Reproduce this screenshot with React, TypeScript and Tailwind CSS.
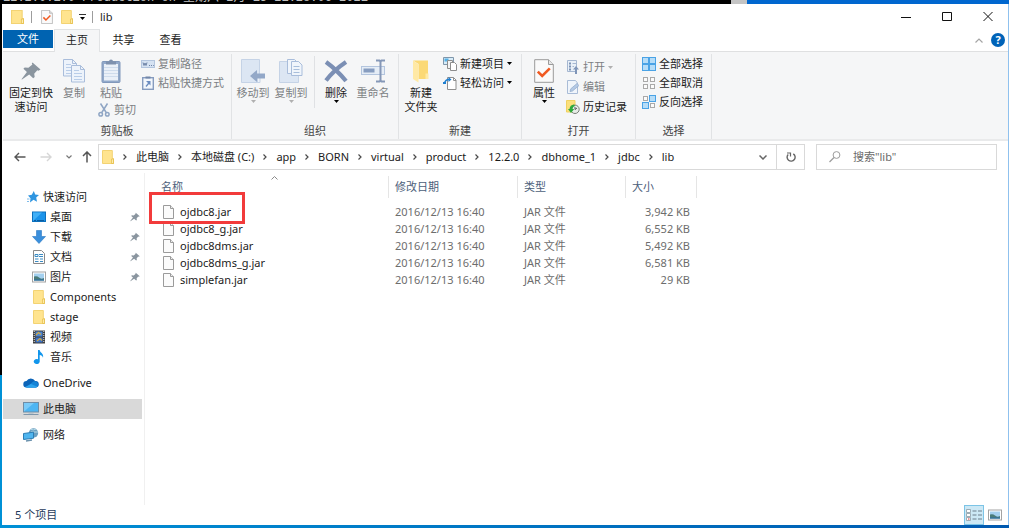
import { ReactNode } from 'react';

interface IconProps {
  className?: string;
}

interface JarFile {
  name: string;
  modified: string;
  type: string;
  size: string;
  highlighted?: boolean;
}

interface NavItem {
  label: string;
  icon: ReactNode;
  pinned?: boolean;
}

const FolderIcon = ({ className = 'h-3.5 w-3' }: IconProps) => (
  <svg className={className} viewBox="0 0 12 14" preserveAspectRatio="none">
    <path d="M0.5 0.5h9.8v8h1.2v5H0.5z" fill="#ffe48f" stroke="#f3d373" />
    <path d="M9.6 9h1.9v4.5H9.6z" fill="#fff0b5" stroke="#e3b93f" strokeWidth="0.7" />
  </svg>
);

const PropertiesIcon = ({ className = 'h-6 w-5' }: IconProps) => (
  <svg className={className} viewBox="0 0 20 24">
    <path d="M0.7 0.7h13.8l4.8 4.8v17.8H0.7z" fill="#fafafa" stroke="#9a9a9a" />
    <path d="M14.5 0.7v4.8h4.8" fill="#e6e6e6" stroke="#9a9a9a" />
    <path d="M3.8 12.6l4.4 4.4 7.6-7.6" fill="none" stroke="#f05a22" strokeWidth="2.6" />
  </svg>
);

const PinIcon = ({ className = 'h-5 w-5' }: IconProps) => (
  <svg className={className} viewBox="0 0 20 18">
    <path d="M11.5 0.5l8 7-2 1.2-1.2-.5-3.1 3.6.5 3.2-1.5 1.2-4-3.6L1 17.6l-.5-.4L5.9 10 2.4 6.8l1.3-1.3 3.7.3 4-3.2-.6-1.2z" fill="#8a959f" />
  </svg>
);

const Sheet = ({ x, y }: { x: number; y: number }) => (
  <g transform={`translate(${x} ${y})`}>
    <path d="M0.5 0.5h9l4 4v12.5h-13z" fill="#edf3fb" stroke="#a9bddb" />
    <path d="M9.5 0.5v4h4" fill="none" stroke="#a9bddb" />
    <path d="M3 5.5h5M3 8.5h8M3 11.5h8M3 14.500h8" stroke="#b9cde8" />
  </g>
);

const CopyIcon = () => (
  <svg className="h-6 w-6" viewBox="0 0 24 24">
    <Sheet x={1} y={0} />
    <Sheet x={9} y={6} />
  </svg>
);

const PasteIcon = () => (
  <svg className="h-6 w-5" viewBox="0 0 20 24">
    <rect x="1" y="2.5" width="18" height="21" rx="1" fill="#92a9ca" stroke="#8198bb" />
    <path d="M3 5h14v16.500H3z" fill="#eaf0f8" />
    <path d="M3 8.500h14M3 11.500h14M3 14.500h14M3 17.500h14" stroke="#cfdcec" />
    <path d="M5 5.500V2.500h3a2 2 0 0 1 4 0h3v3z" fill="#7e91ae" />
  </svg>
);

const CutIcon = () => (
  <svg className="h-3.5 w-3" viewBox="0 0 12 14" fill="none" stroke="#8fa5c4" strokeWidth="1.500">
    <path d="M2.500 0.500l5.700 9M9.500 0.500L3.800 9.500" />
    <circle cx="2.700" cy="11.200" r="1.800" />
    <circle cx="9.300" cy="11.200" r="1.800" />
  </svg>
);

const CopyPathIcon = () => (
  <svg className="h-3 w-3.5" viewBox="0 0 14 12">
    <rect x="0.500" y="2.500" width="13" height="7" fill="#d5e2f2" stroke="#b3c5de" />
    <path d="M2 4.500l1 3 1-2.500 1 2.500 1-3M8 7.500h1M10 7.500h1M12 7.500h.8" fill="none" stroke="#6e83a6" />
  </svg>
);

const PasteShortcutIcon = () => (
  <svg className="h-3.5 w-3" viewBox="0 0 12 14">
    <rect x="0.700" y="1.700" width="10.600" height="11.600" fill="#f3f7fc" stroke="#869cbf" strokeWidth="1.400" />
    <path d="M3.500 0.500h5v2h-5z" fill="#7186a8" />
    <path d="M4 5h4.500v4.500L7 8l-2.500 3L3.500 10 6 7z" fill="#6b8cbf" />
  </svg>
);

const MoveToIcon = () => (
  <svg className="h-6 w-6" viewBox="0 0 24 24">
    <path d="M0.500 0.500h18v23h-18z" fill="#dce6f3" stroke="#c5d3e6" />
    <path d="M16.500 17.500h2.500v6h-2.500z" fill="#eff4fa" stroke="#c5d3e6" />
    <path d="M9 17l7-6v3.500h8v5h-8V23z" fill="#93a8c8" />
  </svg>
);

const CopyToIcon = () => (
  <svg className="h-6 w-6" viewBox="0 0 24 24">
    <path d="M0.500 2.500h19v21H0.500z" fill="#dce6f3" stroke="#c5d3e6" />
    <path d="M8.500 0.500h7l3 3v11h-10z" fill="#f0f5fb" stroke="#a9bddb" />
    <path d="M12.500 2.500h7l3.500 3.500v10.500H12.500z" fill="#f0f5fb" stroke="#a9bddb" />
    <path d="M14.500 7.500h6M14.500 10.500h6M14.500 13.500h6" stroke="#a8bedb" />
  </svg>
);

const DeleteIcon = () => (
  <svg className="h-6 w-6" viewBox="0 0 24 24">
    <path d="M2 3q11 8 20 19M22 3Q10 11 2 21.500" fill="none" stroke="#7b8fb4" strokeWidth="4.200" />
  </svg>
);

const RenameIcon = () => (
  <svg className="h-6 w-6" viewBox="0 0 24 24">
    <rect x="0.500" y="7.500" width="23" height="8" fill="#e5edf6" stroke="#b3c5de" />
    <path d="M2.500 9.500h11v4h-11z" fill="#879dc0" />
    <path d="M15 1.500h3.500l1 1 1-1H24M15 22.500h3.500l1-1 1 1H24M19.500 2.500v19" fill="none" stroke="#8598b8" strokeWidth="2" />
  </svg>
);

const NewFolderIcon = () => (
  <svg className="h-6 w-5" viewBox="0 0 20 24">
    <path d="M7.500 5V20h9.500V1.500H2z" fill="#fbd976" />
    <path d="M14.500 14.500h3v5.500h-3z" fill="#ffeaa6" />
    <path d="M2 1.500v18.500l5.500 3.500V5.500z" fill="#ffe9a5" />
  </svg>
);

const NewItemIcon = () => (
  <svg className="h-3.5 w-3.5" viewBox="0 0 14 14">
    <path d="M0.500 0.500h10v7h-10z" fill="#d8ecf8" stroke="#7f96aa" />
    <path d="M1.500 1.500h4v3h-4z" fill="#54b1e6" />
    <path d="M4.500 3.500h5v8h-5z" fill="#f4f4f4" stroke="#8d8d8d" />
    <path d="M7.500 5.500h4l2 2v6h-6z" fill="#fff" stroke="#8d8d8d" />
  </svg>
);

const EasyAccessIcon = () => (
  <svg className="h-3.5 w-3.5" viewBox="0 0 14 14">
    <path d="M4.500 1.500h6l2.500 2.500v9.500H4.500z" fill="#fff" stroke="#909090" />
    <path d="M10.500 1.500v3H13" fill="none" stroke="#909090" />
    <path d="M1.500 7.500C2 4.500 3.500 3.500 6 3.500" fill="none" stroke="#1f7fd0" strokeWidth="1.600" />
    <path d="M5.500 1L8.500 3.500 5.500 6z" fill="#1f7fd0" />
    <path d="M0 6h3v2H0z" fill="#1f7fd0" />
  </svg>
);

const OpenIcon = () => (
  <svg className="h-3.5 w-3" viewBox="0 0 12 14">
    <path d="M0.500 0.500h9v11h-9z" fill="#e9f0f8" stroke="#a5b7d1" />
    <path d="M2 2.500h2v2H2zM2 5.500h2v2H2zM2 8.500h2v2H2z" fill="#7d93b6" />
    <path d="M5.500 3.500H9M5.500 6.500H7" stroke="#a5b7d1" />
    <path d="M9 6l3 3.500h-2V14H8V9.500H6z" fill="#7f95b8" />
  </svg>
);

const EditIcon = () => (
  <svg className="h-3.5 w-3" viewBox="0 0 12 14">
    <path d="M0.500 0.500h8l2 2.500v10.500H0.500z" fill="#f0f5fb" stroke="#a9bcd7" />
    <path d="M3 11.500l.8-2.700L10 3.500 12 5.500 5.500 11z" fill="#b5cae5" stroke="#8fa7c9" strokeWidth="0.700" />
  </svg>
);

const HistoryIcon = () => (
  <svg className="h-3.5 w-3.5" viewBox="0 0 14 14">
    <path d="M0.500 0.500h8.500v11.500H0.500z" fill="#fbe07c" stroke="#f0d160" />
    <circle cx="9" cy="9.300" r="4.200" fill="#e7ece7" stroke="#788078" />
    <path d="M9 7v2.500l2-1.500" fill="none" stroke="#555" />
    <path d="M8 4.500A5 5 0 0 0 3.500 9H2l3 4 3.200-4H6.500A3.500 3.500 0 0 1 9 6z" fill="#2fa83d" />
  </svg>
);

interface SelectionIconProps {
  filled: number[];
}

// Four squares; the filled indexes are drawn as selected
const SelectionIcon = ({ filled }: SelectionIconProps) => (
  <svg className="h-3.5 w-3.5" viewBox="0 0 14 14">
    {[0, 1, 2, 3].map((i) => {
      const on = filled.includes(i);
      const x = (i % 2) * 7 + (on ? 0.5 : 1.5);
      const y = Math.floor(i / 2) * 7 + (on ? 0.5 : 1.5);
      const side = on ? 6 : 4;
      return (
        <rect key={i} x={x} y={y} width={side} height={side} fill={on ? '#b6ddf8' : '#fbfbfb'} stroke={on ? '#4aa3e6' : '#a9a9a9'} />
      );
    })}
  </svg>
);

const FileIcon = () => (
  <svg className="h-3.5 w-[11px] shrink-0" viewBox="0 0 11 14">
    <path d="M0.500 0.500h7l3 3v10h-10z" fill="#fbfbfb" stroke="#9b9b9b" />
    <path d="M7.500 0.500v3h3" fill="#eee" stroke="#9b9b9b" />
  </svg>
);

const StarIcon = () => (
  <svg className="h-3 w-3" viewBox="0 0 12 12">
    <path d="M6.800 0l1.400 3.600L12 4 9.200 6.600l.8 4.200-3.500-2L3 11.500l.5-4.200L1 4.600l3.800-.8z" fill="#2f95e0" />
    <path d="M0 8h2.500M0 10.500h2" stroke="#7fbcea" />
  </svg>
);

const DesktopIcon = () => (
  <svg className="h-3 w-3.5" viewBox="0 0 14 12">
    <rect x="0.500" y="1" width="13" height="9.500" fill="#1b93ea" stroke="#0c70bd" />
    <path d="M1 10L10 1.500H1z" fill="#41b0f7" />
    <path d="M2 9.500h2M5 9.500h7" stroke="#0b5c9f" />
  </svg>
);

const DownloadIcon = () => (
  <svg className="h-3.5 w-3.5" viewBox="0 0 14 14">
    <path d="M4.500 0.500h5v6H13.500L7 13.500 0.500 6.500h4z" fill="#3a8fdc" stroke="#2c78c2" strokeWidth="0.600" />
  </svg>
);

const DocumentIcon = () => (
  <svg className="h-3.5 w-3" viewBox="0 0 12 14">
    <path d="M0.500 0.500h8l3 3v10H0.500z" fill="#fdfdfd" stroke="#888" />
    <path d="M2 4.500h3v2H2zM6 4.500h4M6 6.500h4M2 9h3.500M7 9h3M2 11.500h3.500M7 11.500h3" fill="none" stroke="#3b8cc4" />
  </svg>
);

const PictureIcon = () => (
  <svg className="h-3 w-3.5" viewBox="0 0 14 12">
    <rect x="0.500" y="1" width="13" height="10" fill="#fff" stroke="#a3a3a3" />
    <path d="M2 2.500h10v7H2z" fill="#a4d0ef" />
    <path d="M2 5.500q3-1 5 1t5 0.500v2.500H2z" fill="#4a7b78" />
    <path d="M2 8.500h10v1H2z" fill="#2b6fab" />
  </svg>
);

const VideoIcon = () => (
  <svg className="h-3.5 w-3" viewBox="0 0 12 14">
    <path d="M0 0.500h12v13H0z" fill="#3f3f3f" />
    <path d="M1.200 1v12M10.800 1v12" stroke="#e6e6e6" strokeDasharray="1 1" />
    <path d="M2.500 1.500h7v5h-7z" fill="#4b86d6" />
    <path d="M2.500 7.500h7v5h-7z" fill="#3d73c7" />
    <path d="M3 5l2.500-2.500L8 4.500M4 11l3-2.500 2 2" fill="none" stroke="#d4a940" strokeWidth="1.200" />
  </svg>
);

const MusicIcon = () => (
  <svg className="h-3.5 w-3" viewBox="0 0 12 14">
    <path d="M5 0h1.700c0 2.500 4.300 3.300 3.300 7.800C9.500 5.800 8.300 5 6.700 5v6.200A3 2.500 0 1 1 5 9.300z" fill="#1296ec" />
  </svg>
);

const OneDriveIcon = () => (
  <svg className="h-3 w-4" viewBox="0 0 16 12">
    <path d="M3.500 10.500a3.200 3.200 0 0 1 0-6.400 4.800 4.800 0 0 1 8.600 0 3.200 3.200 0 0 1 .9 6.400z" fill="#0c64b8" />
    <path d="M3.300 10.500L9 5.500a3.700 3.700 0 0 1 4-1 3.200 3.200 0 0 1 0 6z" fill="#1583d6" />
    <path d="M3.500 10.500a3 3 0 0 1-1.500-.4l6-3.100 6.500 2.800a3 3 0 0 1-1.500.7z" fill="#2ba3ee" />
  </svg>
);

const ThisPcIcon = () => (
  <svg className="h-3.5 w-4" viewBox="0 0 16 14">
    <rect x="0.500" y="0.500" width="15" height="9.500" fill="#4db5f2" stroke="#6f8da6" />
    <path d="M1 9.500L11 1H1z" fill="#7bcbf8" />
    <path d="M5.500 10.500h5v1h-5z" fill="#9db2c2" />
    <path d="M0.500 12.500h15" stroke="#7f97ab" />
  </svg>
);

const NetworkIcon = () => (
  <svg className="h-3.5 w-4" viewBox="0 0 16 14">
    <circle cx="10.500" cy="5" r="4.700" fill="#6b9fc0" />
    <path d="M8 1.500q3 1 5-.5M8 4h7" stroke="#b7dbe9" fill="none" />
    <path d="M0.500 5.500l10-1.300v6l-10 1.300z" fill="#4fb5ef" stroke="#2d7db4" />
    <path d="M3 13l6-1" stroke="#6d93ae" strokeWidth="1.300" />
  </svg>
);

const Caret = ({ className = 'text-black' }: IconProps) => (
  <svg className={`h-[3px] w-[5px] shrink-0 ${className}`} viewBox="0 0 5 3">
    <path d="M0 0h5L2.500 3z" fill="currentColor" />
  </svg>
);

const Crumb = () => (
  <svg className="mx-[9px] h-1.5 w-1 shrink-0" viewBox="0 0 4 6">
    <path d="M0.500 0.500L3 3 0.500 5.500" fill="none" stroke="#4a4a4a" strokeWidth="1.200" />
  </svg>
);

interface LargeButtonProps {
  icon: ReactNode;
  lines: string[];
  width: string;
  disabled?: boolean;
  caret?: boolean;
}

const LargeButton = ({ icon, lines, width, disabled, caret }: LargeButtonProps) => (
  <button
    disabled={disabled}
    className={`flex shrink-0 flex-col items-center leading-[14px] ${width} ${disabled ? 'text-[#7c7f83]' : 'text-[#1b1b1b]'}`}
  >
    <span className="flex h-[30px] items-center">{icon}</span>
    {lines.map((line) => (
      <span key={line} className="whitespace-nowrap">{line}</span>
    ))}
    {caret && <Caret className={disabled ? 'text-[#b0b0b0]' : 'text-black'} />}
  </button>
);

interface SmallButtonProps {
  icon: ReactNode;
  label: string;
  disabled?: boolean;
  caret?: boolean;
  height?: string;
}

const SmallButton = ({ icon, label, disabled, caret, height = 'h-[19px]' }: SmallButtonProps) => (
  <button
    disabled={disabled}
    className={`flex items-center gap-[3px] whitespace-nowrap ${height} ${disabled ? 'text-[#7c7f83]' : 'text-[#1b1b1b]'}`}
  >
    <span className="flex w-3.5 justify-center">{icon}</span>
    {label}
    {caret && <Caret className={disabled ? 'text-[#b0b0b0]' : 'text-black'} />}
  </button>
);

interface GroupProps {
  label: string;
  width: string;
  children: ReactNode;
}

const Group = ({ label, width, children }: GroupProps) => (
  <section className={`mt-0.5 flex shrink-0 flex-col border-r border-[#e1e3e5] ${width}`}>
    <div className="flex h-[69px] items-start">{children}</div>
    <div className="text-center leading-4 text-[#444]">{label}</div>
  </section>
);

const files: JarFile[] = [
  { name: 'ojdbc8.jar', modified: '2016/12/13 16:40', type: 'JAR 文件', size: '3,942 KB', highlighted: true },
  { name: 'ojdbc8_g.jar', modified: '2016/12/13 16:40', type: 'JAR 文件', size: '6,552 KB' },
  { name: 'ojdbc8dms.jar', modified: '2016/12/13 16:40', type: 'JAR 文件', size: '5,492 KB' },
  { name: 'ojdbc8dms_g.jar', modified: '2016/12/13 16:40', type: 'JAR 文件', size: '6,581 KB' },
  { name: 'simplefan.jar', modified: '2016/12/13 16:40', type: 'JAR 文件', size: '29 KB' },
];

const quickAccess: NavItem[] = [
  { label: '桌面', icon: <DesktopIcon />, pinned: true },
  { label: '下载', icon: <DownloadIcon />, pinned: true },
  { label: '文档', icon: <DocumentIcon />, pinned: true },
  { label: '图片', icon: <PictureIcon />, pinned: true },
  { label: 'Components', icon: <FolderIcon /> },
  { label: 'stage', icon: <FolderIcon /> },
  { label: '视频', icon: <VideoIcon /> },
  { label: '音乐', icon: <MusicIcon /> },
];

const crumbs = ['此电脑', '本地磁盘 (C:)', 'app', 'BORN', 'virtual', 'product', '12.2.0', 'dbhome_1', 'jdbc', 'lib'];

const TitleBar = () => (
  <header className="flex h-[25px] items-center">
    <div className="flex items-center pl-2">
      <FolderIcon className="h-3.5 w-[13px]" />
      <span className="mx-[7px] h-3 w-px bg-[#9d9d9d]" />
      <button aria-label="属性" className="ml-0.5"><PropertiesIcon className="h-3.5 w-3" /></button>
      <button aria-label="新建文件夹" className="ml-2"><FolderIcon className="h-3.5 w-3" /></button>
      <button aria-label="自定义快速访问工具栏" className="ml-1.5 flex w-[7px] flex-col items-center gap-0.5">
        <span className="h-px w-[7px] bg-[#333]" />
        <Caret />
      </button>
      <span className="ml-1.5 h-3 w-px bg-[#9d9d9d]" />
      <h1 className="pl-[7px] text-[#1b1b1b]">lib</h1>
    </div>
    <div className="ml-auto flex h-full">
      <button aria-label="最小化" className="flex w-[41px] items-center justify-center">
        <svg className="h-2.5 w-2.5" viewBox="0 0 10 10"><path d="M0 5.500h10" stroke="#111" /></svg>
      </button>
      <button aria-label="最大化" className="flex w-[41px] items-center justify-center">
        <svg className="h-[9px] w-2.5" viewBox="0 0 10 9"><path d="M0.500 0.500h9v8h-9z" fill="none" stroke="#111" /></svg>
      </button>
      <button aria-label="关闭" className="flex w-[41px] items-center justify-center">
        <svg className="h-[9px] w-2.5" viewBox="0 0 10 9"><path d="M0.500 0l9 9M9.500 0l-9 9" stroke="#111" /></svg>
      </button>
    </div>
  </header>
);

const TabBar = () => (
  <nav className="flex h-[23px] items-start border-b border-[#dfe0e1]">
    <button className="mt-px h-[18px] w-[50px] bg-[#0063b1] text-white">文件</button>
    <button className="ml-px h-[23px] w-[46px] border-x border-t border-[#e1e3e5] bg-[#f5f6f7] pb-0.5 text-[#1b1b1b]">主页</button>
    <button className="h-[21px] w-[47px] text-[#1b1b1b]">共享</button>
    <button className="h-[21px] w-[47px] text-[#1b1b1b]">查看</button>
    <div className="ml-auto flex h-full items-center gap-2 pr-[3px]">
      <button aria-label="最小化功能区">
        <svg className="h-[5px] w-2" viewBox="0 0 8 5"><path d="M0.500 4.500L4 1l3.500 3.500" fill="none" stroke="#a5a5a5" strokeWidth="1.200" /></svg>
      </button>
      <button aria-label="帮助" className="h-3.5 w-3.5 rounded-full bg-[#0063b8] text-[11px] leading-[14px] font-bold text-white">?</button>
    </div>
  </nav>
);

const Ribbon = () => (
  <div className="flex border-b-2 border-[#e9eaeb] bg-[#f5f6f7]">
    <Group label="剪贴板" width="w-[229px]">
      <div className="flex pt-0.5">
        <LargeButton icon={<PinIcon />} lines={['固定到快', '速访问']} width="w-14" />
        <LargeButton icon={<CopyIcon />} lines={['复制']} width="w-[30px]" disabled />
        <div className="ml-1 flex w-[46px] flex-col">
          <LargeButton icon={<PasteIcon />} lines={['粘贴']} width="w-9" disabled />
          <span className="pt-px pl-1"><SmallButton icon={<CutIcon />} label="剪切" height="h-[18px]" disabled /></span>
        </div>
      </div>
      <div className="ml-0.5">
        <SmallButton icon={<CopyPathIcon />} label="复制路径" disabled />
        <SmallButton icon={<PasteShortcutIcon />} label="粘贴快捷方式" disabled />
      </div>
    </Group>
    <Group label="组织" width="w-[167px]">
      <div className="flex pt-0.5 pl-0.5">
        <LargeButton icon={<MoveToIcon />} lines={['移动到']} width="w-[38px]" disabled caret />
        <LargeButton icon={<CopyToIcon />} lines={['复制到']} width="w-[38px]" disabled caret />
        <span className="mx-1 h-[52px] w-px bg-[#dfe1e4]" />
        <LargeButton icon={<DeleteIcon />} lines={['删除']} width="w-[34px]" caret />
        <LargeButton icon={<RenameIcon />} lines={['重命名']} width="w-10" disabled />
      </div>
    </Group>
    <Group label="新建" width="w-[123px]">
      <div className="pt-0.5"><LargeButton icon={<NewFolderIcon />} lines={['新建', '文件夹']} width="w-11" /></div>
      <div>
        <SmallButton icon={<NewItemIcon />} label="新建项目" caret />
        <SmallButton icon={<EasyAccessIcon />} label="轻松访问" caret />
      </div>
    </Group>
    <Group label="打开" width="w-[114px]">
      <div className="pt-0.5"><LargeButton icon={<PropertiesIcon />} lines={['属性']} width="w-11" caret /></div>
      <div className="pt-[3px]">
        <SmallButton icon={<OpenIcon />} label="打开" height="h-5" disabled caret />
        <SmallButton icon={<EditIcon />} label="编辑" height="h-5" disabled />
        <SmallButton icon={<HistoryIcon />} label="历史记录" height="h-5" />
      </div>
    </Group>
    <Group label="选择" width="w-[76px]">
      <div className="pl-1.5">
        <SmallButton icon={<SelectionIcon filled={[0, 1, 2, 3]} />} label="全部选择" />
        <SmallButton icon={<SelectionIcon filled={[]} />} label="全部取消" />
        <SmallButton icon={<SelectionIcon filled={[1, 2]} />} label="反向选择" />
      </div>
    </Group>
  </div>
);

const AddressBar = () => (
  <div className="flex items-center py-[3px] pr-[11px]">
    <div className="flex w-[95px] shrink-0 items-center pl-[11px]">
      <button aria-label="后退">
        <svg className="h-2.5 w-3" viewBox="0 0 12 10"><path d="M11.500 5H1M5 1L1 5l4 4" fill="none" stroke="#555" strokeWidth="1.400" /></svg>
      </button>
      <button aria-label="前进" className="ml-3.5" disabled>
        <svg className="h-2.5 w-3" viewBox="0 0 12 10"><path d="M0.500 5H11M7 1l4 4-4 4" fill="none" stroke="#d6d6d6" strokeWidth="1.400" /></svg>
      </button>
      <button aria-label="最近浏览的位置" className="ml-3.5">
        <svg className="h-1 w-1.5" viewBox="0 0 6 4"><path d="M0.500 0.500L3 3l2.500-2.500" fill="none" stroke="#777" strokeWidth="1.200" /></svg>
      </button>
      <button aria-label="上移" className="ml-2.5">
        <svg className="h-3 w-2.5" viewBox="0 0 10 12"><path d="M5 11.500V1M1 5l4-4 4 4" fill="none" stroke="#555" strokeWidth="1.500" /></svg>
      </button>
    </div>
    <div className="flex h-[26px] min-w-0 flex-1 items-center border border-[#d9d9d9]">
      <div className="flex min-w-0 flex-1 items-center overflow-hidden pl-[3px]">
        <FolderIcon className="h-3.5 w-3 shrink-0" />
        {crumbs.map((crumb) => (
          <span key={crumb} className="flex shrink-0 items-center">
            <Crumb />
            <button className="whitespace-nowrap text-[#1b1b1b]">{crumb}</button>
          </span>
        ))}
      </div>
      <button aria-label="以前的位置" className="flex w-[26px] justify-center">
        <svg className="h-[5px] w-2" viewBox="0 0 8 5"><path d="M0.500 0.500L4 4 7.500 0.500" fill="none" stroke="#666" strokeWidth="1.500" /></svg>
      </button>
      <button aria-label="刷新" className="flex h-full w-7 items-center justify-center border-l border-[#d9d9d9]">
        <svg className="h-2.5 w-2.5" viewBox="0 0 10 10">
          <path d="M7.300 1.800A4 4 0 1 1 2.200 2.400" fill="none" stroke="#666" strokeWidth="1.400" />
          <path d="M1 1h3.500v3.500" fill="none" stroke="#666" strokeWidth="1.200" />
        </svg>
      </button>
    </div>
    <label className="ml-[11px] flex h-[26px] w-[181px] shrink-0 items-center gap-3 border border-[#d9d9d9] pl-3">
      <svg className="h-3 w-3 shrink-0" viewBox="0 0 12 12" fill="none" stroke="#9c9c9c">
        <circle cx="7.500" cy="4" r="3.400" />
        <path d="M5 6.500L0.500 11" strokeWidth="1.200" />
      </svg>
      <input
        type="text"
        aria-label="搜索"
        placeholder={'搜索"lib"'}
        className="w-full min-w-0 outline-none placeholder:text-[#6b6b6b]"
      />
    </label>
  </div>
);

const Sidebar = () => (
  <aside className="w-[142px] shrink-0 border-r border-[#f0f0f0] pt-3.5 pr-0.5 text-[#1b1b1b]">
    <a href="#quick" className="flex h-5 items-center gap-1 pl-6">
      <StarIcon />
      快速访问
    </a>
    {quickAccess.map((item) => (
      <a key={item.label} href="#item" className="flex h-5 items-center gap-1 pr-0.5 pl-[29px]">
        <span className="flex w-3.5 justify-center">{item.icon}</span>
        {item.label}
        {item.pinned && <PinIcon className="ml-auto h-2.5 w-2.5" />}
      </a>
    ))}
    <a href="#onedrive" className="mt-1.5 flex h-5 items-center gap-1 pl-5"><OneDriveIcon />OneDrive</a>
    <a href="#pc" className="mt-1.5 flex h-5 items-center gap-1 bg-[#d9d9d9] pl-5"><ThisPcIcon />此电脑</a>
    <a href="#network" className="mt-1.5 flex h-5 items-center gap-1 pl-5"><NetworkIcon />网络</a>
  </aside>
);

const FileTable = () => (
  <table className="table-fixed border-collapse self-start text-left text-[#6d6d6d]">
    <thead className="text-[#4c607a]">
      <tr className="h-[27px] align-top">
        <th className="relative w-[236px] p-0 font-normal">
          <div className="h-[22px] border-r border-[#e5e5e5] px-2 leading-[22px]">名称</div>
          <svg className="absolute top-0 left-1/2 h-1 w-[7px]" viewBox="0 0 7 4"><path d="M0.500 3.500l3-3 3 3" fill="none" stroke="#8a8a8a" /></svg>
        </th>
        <th className="w-[129px] p-0 font-normal">
          <div className="h-[22px] border-r border-[#e5e5e5] px-1.5 leading-[22px]">修改日期</div>
        </th>
        <th className="w-[108px] p-0 font-normal">
          <div className="h-[22px] border-r border-[#e5e5e5] px-1.5 leading-[22px]">类型</div>
        </th>
        <th className="w-[71px] p-0 font-normal">
          <div className="h-[22px] border-r border-[#e5e5e5] px-1.5 leading-[22px]">大小</div>
        </th>
      </tr>
    </thead>
    <tbody className="leading-[17px]">
      {files.map((file) => (
        <tr key={file.name}>
          <td className="relative p-0">
            <div className="flex h-[17px] items-center gap-1.5 pl-2.5 text-[#1b1b1b]">
              <FileIcon />
              {file.name}
            </div>
            {file.highlighted && (
              <span className="pointer-events-none absolute -top-[11px] -left-1 z-10 h-8 w-24 border-[3px] border-[#f23b3b]" />
            )}
          </td>
          <td className="px-1.5 py-0">{file.modified}</td>
          <td className="px-1.5 py-0">{file.type}</td>
          <td className="py-0 pr-[7px] pl-0 text-right">{file.size}</td>
        </tr>
      ))}
    </tbody>
  </table>
);

const StatusBar = () => (
  <footer className="flex h-5 items-center pr-1.5 pl-3 text-[#1e395b]">
    <span>5 个项目</span>
    <div className="ml-auto flex items-center gap-1">
      <button aria-label="详细信息" className="flex h-5 w-5 items-center justify-center border border-[#7cc4e6] bg-[#cce8f5]">
        <svg className="h-3 w-4" viewBox="0 0 16 12">
          <path d="M0.500 0.500h4v3h-4zM0.500 4.500h4v3h-4zM0.500 8.500h4v3h-4z" fill="#fff" stroke="#8a9aa5" strokeWidth="0.800" />
          <path d="M2 10h1.500" stroke="#d33" />
          <path d="M6.500 2h4M12 2h4M6.500 6h4M12 6h4M6.500 10h4M12 10h4" stroke="#6d7f8c" />
        </svg>
      </button>
      <button aria-label="大图标"><PictureIcon /></button>
    </div>
  </footer>
);

export default function App() {
  return (
    <div className="flex min-h-screen flex-col bg-[#0091d6] font-['Noto_Sans','Noto_Sans_CJK_SC',sans-serif] text-[11px] leading-4">
      {/* Desktop and console behind the window */}
      <div className="flex h-1 overflow-hidden bg-[#0067cf]">
        <div className="flex w-[731px] items-end overflow-hidden bg-black pl-[3px] font-['Liberation_Mono','Noto_Sans_CJK_SC',monospace] text-[12px] leading-3 whitespace-pre text-[#c0c0c0]">
          12.2.0.1.0 Production on 星期六 2月 13 21:28:06 2021
        </div>
        <div className="w-4 bg-[#c4c4c4]" />
      </div>
      <div className="flex flex-1">
        <div className="w-0.5 shrink-0">
          <div className="h-[371px] bg-black" />
        </div>
        <main className="flex min-w-0 flex-1 flex-col border-r border-[#8fc1ee] bg-white pl-px">
          <TitleBar />
          <TabBar />
          <Ribbon />
          <AddressBar />
          <div className="flex flex-1">
            <Sidebar />
            <div className="flex flex-1 flex-col pt-[3px] pl-2">
              <FileTable />
            </div>
          </div>
          <StatusBar />
        </main>
      </div>
      <div className="h-[3px] bg-linear-to-r from-[#0091d6] to-[#0059b0]" />
    </div>
  );
}
